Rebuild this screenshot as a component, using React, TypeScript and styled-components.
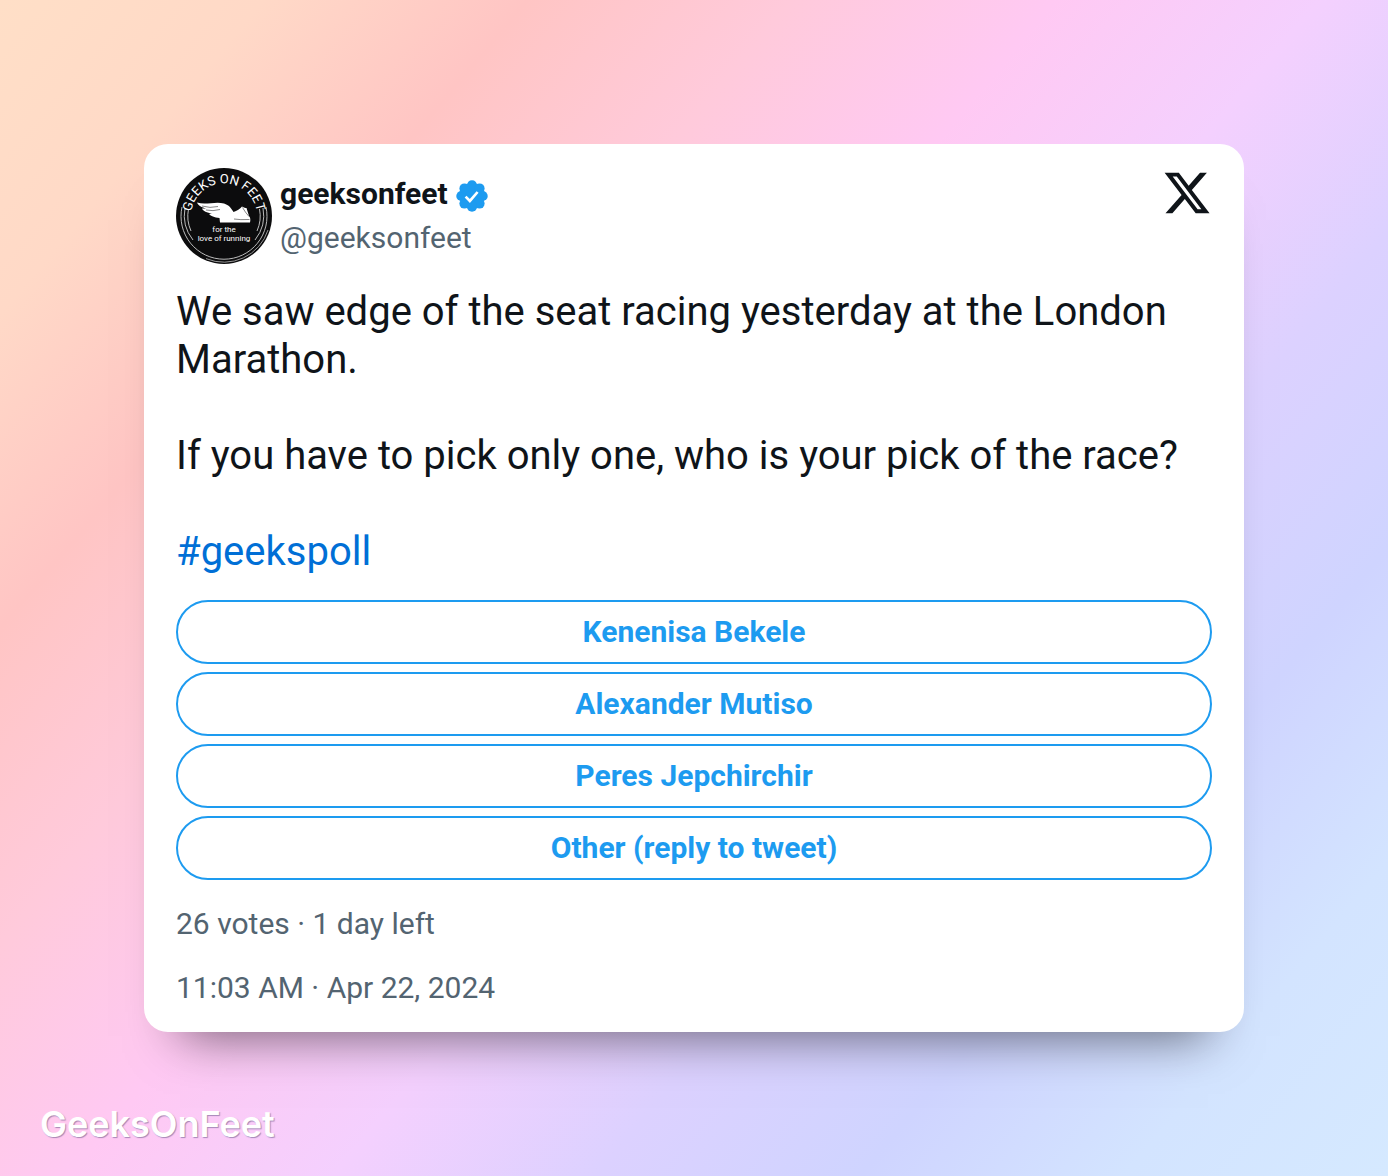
import React from "react";
import styled, { createGlobalStyle } from "styled-components";

const GlobalStyle = createGlobalStyle`
  *, *::before, *::after { box-sizing: border-box; }
  body {
    margin: 0;
    font-family: Roboto, "Liberation Sans", sans-serif;
  }
`;

const Page = styled.div`
  position: relative;
  min-height: 100vh;
  padding: 144px;
  background: linear-gradient(
    130deg,
    #ffdfc7,
    #ffd9c7,
    #ffc5c4,
    #ffcadb,
    #ffc9f3,
    #f4d0fe,
    #dcd1ff,
    #cfd4ff,
    #d3e4ff,
    #d5e9ff
  );
`;

const Card = styled.article`
  padding: 24px 32px;
  border-radius: 24px;
  background: #fff;
  color: #0f1419;
  box-shadow: 0 40px 48px -36px rgba(0, 0, 0, 0.54);
`;

const Header = styled.header`
  display: flex;
  align-items: flex-start;
  gap: 8px;
`;

const AvatarArt = styled.svg`
  width: 96px;
  height: 96px;
  flex: none;
`;

const Identity = styled.div`
  flex: 1;
  padding-top: 4px;
`;

const NameRow = styled.div`
  display: flex;
  align-items: center;
  gap: 8px;
  font-size: 30px;
  font-weight: 700;
  line-height: 44px;
`;

const BadgeIcon = styled.svg`
  width: 32px;
  height: 32px;
  margin-top: 4px;
`;

const Handle = styled.a`
  display: block;
  color: #536471;
  font-size: 30px;
  line-height: 44px;
  text-decoration: none;
`;

const BrandIcon = styled.svg`
  width: 50px;
  height: 50px;
  fill: #0f1419;
`;

const Message = styled.div`
  margin-top: 24px;
  font-size: 40px;
  line-height: 48px;
`;

const Paragraph = styled.p`
  margin: 0 0 48px;

  &:last-child { margin-bottom: 0; }
`;

const Hashtag = styled.a`
  color: #006fd6;
  text-decoration: none;
`;

const Poll = styled.div`
  display: grid;
  gap: 8px;
  margin-top: 24px;
`;

const Choice = styled.button`
  height: 64px;
  padding: 0 32px;
  border: 2px solid #1d9bf0;
  border-radius: 32px;
  background: transparent;
  color: #1d9bf0;
  font: 700 30px/40px Roboto, "Liberation Sans", sans-serif;
  cursor: pointer;
`;

const Meta = styled.p`
  margin: 24px 0 0;
  color: #536471;
  font-size: 30px;
  line-height: 40px;
`;

const Watermark = styled.footer`
  position: absolute;
  left: 40px;
  bottom: 28px;
  color: #fff;
  font-family: Inter, Roboto, sans-serif;
  font-size: 36px;
  font-weight: 600;
  line-height: 48px;
  text-shadow: 1px 1px 1px rgba(80, 70, 120, 0.5);
`;

const choices = ["Kenenisa Bekele", "Alexander Mutiso", "Peres Jepchirchir", "Other (reply to tweet)"];

const Avatar = () => (
  <AvatarArt viewBox="0 0 96 96" role="img" aria-label="Geeks on Feet">
    <defs><path id="ring" d="M17.500 61A33 33 0 1 1 78.500 61" /></defs>
    <circle cx="48" cy="48" r="48" fill="#0c0c0d" />
    <path d="M92 62A46.300 46.300 0 0 1 30 90.600" fill="none" stroke="#bbb" strokeWidth="0.8" />
    <g fill="none" stroke="#bbb" strokeWidth="1">
      <path d="M6 39A43 43 0 1 0 90 39" />
      <path d="M9 40A39.500 39.500 0 0 0 17 72M87 40A39.500 39.500 0 0 1 79 72" />
      <path d="M12.500 41A36.200 36.200 0 0 0 15 63M83.500 41A36.200 36.200 0 0 1 81 63" />
    </g>
    <g fill="#fff" fontFamily="Roboto, sans-serif" textAnchor="middle">
      <text fontSize="13"><textPath href="#ring" startOffset="50%">GEEKS ON FEET</textPath></text>
      <text x="48" y="64" fontSize="8">for the</text>
      <text x="48" y="72.500" fontSize="8">love of running</text>
    </g>
    <path d="M21 34.500C30 37.500 39 33 48 35.500C53 37 55 40 57.500 44C61 43 64 41 66 38.500C68 40 69.500 40 70.500 40L73 48Q75 50 74 54.500H56L44 54.500L43.500 50C38 49.500 35 48 33 46L36 45.500C31 45 27 43 26 40.500L30 40.500C26 39.500 22 37.500 21 34.500Z" fill="#fff" />
    <g fill="none" stroke="#0c0c0d" strokeWidth="0.5">
      <path d="M26 38Q34 40.500 42 38.500M30 42Q37 43.500 44 41.500" />
      <path d="M58 51Q64 52 73.500 51.500M66.500 39.500Q69 44 73 48.500" />
    </g>
  </AvatarArt>
);

export default function App() {
  return (
    <>
      <GlobalStyle />
      <Page>
        <Card>
          <Header>
            <Avatar />
            <Identity>
              <NameRow>
                geeksonfeet
                <BadgeIcon viewBox="0 0 24 24" role="img" aria-label="Verified account">
                  <g fill="#1d9bf0">
                    <circle cx="12" cy="12" r="9.500" />
                    {[0, 45, 90, 135, 180, 225, 270, 315].map((angle) => (
                      <circle key={angle} cx="12" cy="4" r="3.800" transform={`rotate(${angle} 12 12)`} />
                    ))}
                  </g>
                  <path d="m7.200 12.500 3.200 3.200 5.800-6.700" fill="none" stroke="#fff" strokeWidth="2" />
                </BadgeIcon>
              </NameRow>
              <Handle href="#profile">@geeksonfeet</Handle>
            </Identity>
            <BrandIcon viewBox="0 0 24 24" role="img" aria-label="X">
              <path d="M18.244 2.250h3.308l-7.227 8.260 8.502 11.240H16.170l-5.214-6.817L4.990 21.750H1.680l7.730-8.835L1.254 2.250H8.080l4.713 6.231zm-1.161 17.520h1.833L7.084 4.126H5.117z" />
            </BrandIcon>
          </Header>
          <Message>
            <Paragraph>We saw edge of the seat racing yesterday at the London Marathon.</Paragraph>
            <Paragraph>If you have to pick only one, who is your pick of the race?</Paragraph>
            <Paragraph><Hashtag href="#geekspoll">#geekspoll</Hashtag></Paragraph>
          </Message>
          <Poll role="group" aria-label="Poll">
            {choices.map((choice) => <Choice key={choice} type="button">{choice}</Choice>)}
          </Poll>
          <Meta>26 votes · 1 day left</Meta>
          <Meta><time dateTime="2024-04-22T11:03">11:03 AM · Apr 22, 2024</time></Meta>
        </Card>
        <Watermark>GeeksOnFeet</Watermark>
      </Page>
    </>
  );
}
